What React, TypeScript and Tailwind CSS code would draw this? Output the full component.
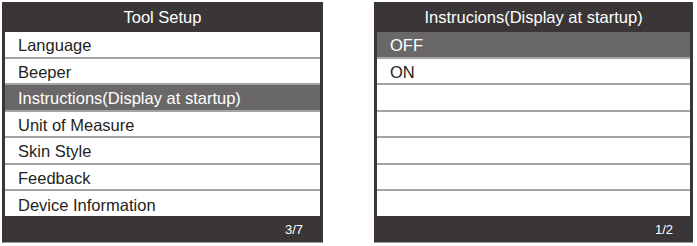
const leftItems = [
  'Language',
  'Beeper',
  'Instructions(Display at startup)',
  'Unit of Measure',
  'Skin Style',
  'Feedback',
  'Device Information',
]

const rightItems = ['OFF', 'ON', '', '', '', '', '']

function Panel({
  title,
  items,
  selected,
  page,
  className,
}: {
  title: string
  items: string[]
  selected: number
  page: string
  className: string
}) {
  return (
    <div className={`flex flex-col bg-[#3a3637] border-b border-[#9c9a9b] ${className}`}>
      <div className="h-[30px] shrink-0 flex items-center justify-center text-white text-[16.5px] leading-none pt-[1px]">
        {title}
      </div>
      <div className="flex-1 min-h-0 flex flex-col mx-[3px] bg-white">
        {items.map((item, i) => (
          <div
            key={i}
            className={`flex-1 basis-0 min-h-0 flex items-center pl-[13px] pt-[2px] text-[16.5px] leading-none border-b-2 border-[#a4a3a5] last:border-b-0 ${
              i === selected ? 'bg-[#6a6768] text-white' : 'text-[#231f20]'
            }`}
          >
            {item}
          </div>
        ))}
      </div>
      <div className="h-[26px] shrink-0 flex items-center justify-end pr-[20px] text-white text-[13px] leading-none">
        {page}
      </div>
    </div>
  )
}

export default function App() {
  return (
    <div
      className="w-[697px] h-[246px] bg-white flex pt-[2px] pl-[2px]"
      style={{ fontFamily: '"Liberation Sans", Arial, sans-serif' }}
    >
      <Panel
        title="Tool Setup"
        items={leftItems}
        selected={2}
        page="3/7"
        className="w-[321px] h-[241px]"
      />
      <Panel
        title="Instrucions(Display at startup)"
        items={rightItems}
        selected={0}
        page="1/2"
        className="w-[319px] h-[241px] ml-[51px]"
      />
    </div>
  )
}
